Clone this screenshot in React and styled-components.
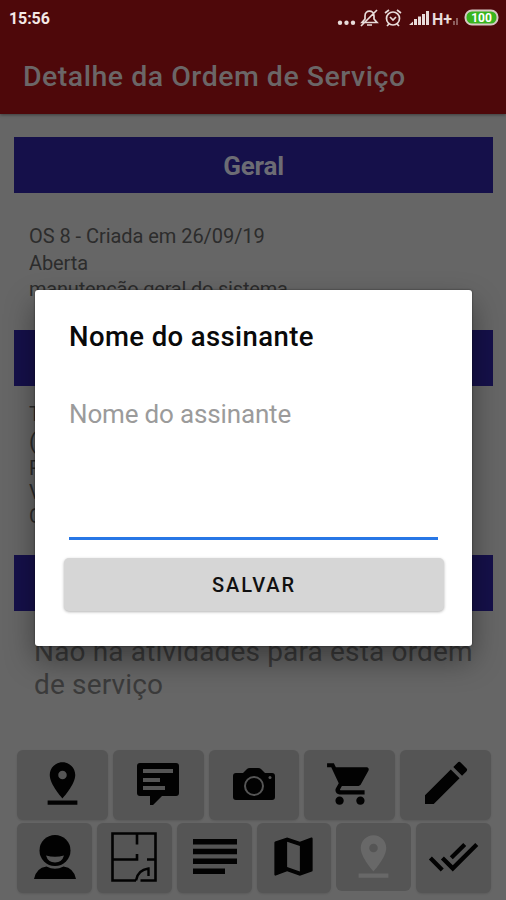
import React from "react";
import styled, { createGlobalStyle } from "styled-components";
import { MdDoneAll, MdEdit, MdMap, MdPinDrop, MdShoppingCart } from "react-icons/md";

const GlobalStyle = createGlobalStyle`
  * {
    box-sizing: border-box;
  }
  body {
    margin: 0;
    background-color: #666666;
    font-family: Roboto, sans-serif;
  }
`;

const Screen = styled.div`
  position: relative;
  width: 506px;
  height: 900px;
  overflow: hidden;
  background-color: #666666;
`;

const Header = styled.header`
  height: 114px;
  background-color: #4e080a;
  box-shadow: 0 1px 3px rgba(0, 0, 0, 0.4);
`;

const StatusBar = styled.div`
  display: flex;
  align-items: center;
  justify-content: space-between;
  height: 36px;
  padding: 0 7px 0 9px;
`;

const Clock = styled.span`
  color: #f4e9e6;
  font-size: 16px;
  font-weight: 700;
  letter-spacing: -0.1px;
`;

const StatusIcons = styled.svg`
  display: block;
`;

const Title = styled.h1`
  margin: 0;
  padding: 23px 0 0 23px;
  color: #6b6667;
  font-size: 28.5px;
  line-height: 36px;
  font-weight: 500;
  letter-spacing: 0.5px;
  white-space: nowrap;
`;

const Page = styled.main`
  display: flex;
  flex-direction: column;
  height: 786px;
  padding: 23px 13px 0 14px;
`;

const Banner = styled.h2`
  flex: none;
  height: 56px;
  margin: 0;
  color: #6c6c74;
  background-color: #15104a;
  font-size: 26px;
  line-height: 58px;
  font-weight: 700;
  letter-spacing: -0.2px;
  text-align: center;
`;

const Details = styled.div`
  flex: none;
  height: ${({ height }) => height}px;
  padding: ${({ top }) => top}px 15px 0;
  color: #2c2c2c;
  overflow: hidden;
`;

const Line = styled.div`
  height: ${({ height }) => height}px;
  font-size: ${({ size }) => size}px;
  line-height: ${({ height }) => height}px;
  letter-spacing: ${({ spacing = 0 }) => spacing}px;
`;

const Empty = styled.p`
  flex: none;
  height: 139px;
  margin: 0;
  padding: 24px 0 0 20px;
  color: #3b3b3b;
  font-size: 28px;
  line-height: 33px;
  letter-spacing: 0.16px;
  white-space: nowrap;
`;

const Row = styled.div`
  display: grid;
  grid-template-columns: repeat(${({ count }) => count}, 1fr);
  gap: 5px;
  padding: 0 2px 0 3px;
  margin-bottom: 3px;
`;

const Action = styled.button`
  display: flex;
  align-items: center;
  justify-content: center;
  height: ${({ disabled }) => (disabled ? 68 : 70)}px;
  padding: 0 0 ${({ lift = 3 }) => lift}px ${({ shift = 0 }) => shift}px;
  border: 0;
  border-radius: 6px;
  color: ${({ disabled }) => (disabled ? "#686868" : "#020202")};
  background-color: #555555;
  box-shadow: ${({ disabled }) =>
    disabled ? "none" : "0 1px 2px rgba(0, 0, 0, 0.12)"};
  svg {
    flex: none;
  }
`;

const Dialog = styled.section`
  position: absolute;
  top: 290px;
  left: 35px;
  display: flex;
  flex-direction: column;
  width: 437px;
  height: 356px;
  padding: 28px 28px 33px 29px;
  border-radius: 3px;
  background-color: #ffffff;
  box-shadow: 0 0 2px rgba(0, 0, 0, 0.6), 0 14px 30px rgba(0, 0, 0, 0.4);
`;

const DialogTitle = styled.h3`
  margin: 0 5px;
  color: #090909;
  font-size: 27.5px;
  line-height: 37px;
  font-weight: 500;
  letter-spacing: 0.4px;
`;

const NameField = styled.textarea`
  height: 152px;
  margin: 33px 6px 18px 5px;
  padding: 10px 0;
  border: 0;
  border-bottom: 3px solid #2877e6;
  outline: 0;
  resize: none;
  color: #111111;
  font: 400 26px/32px Roboto, sans-serif;
  letter-spacing: -0.16px;
  &::placeholder {
    color: #9b9b9b;
    opacity: 1;
  }
`;

const SaveButton = styled.button`
  height: 53px;
  flex: none;
  padding: 0;
  border: 0;
  border-radius: 5px;
  color: #101010;
  background-color: #d6d6d6;
  box-shadow: 0 1px 3px rgba(0, 0, 0, 0.3);
  font: 500 20px Roboto, sans-serif;
  letter-spacing: 1.9px;
`;

const Message = () => (
  <svg width="42" height="42" viewBox="0 0 42 42">
    <path
      fill="currentColor"
      fillRule="evenodd"
      d="M3 0H39Q42 0 42 3V30Q42 33 39 33H25L16 42H13V33H3Q0 33 0 30V3Q0 0 3 0ZM6 6V10H36V6ZM6 15V19H23V15ZM6 23V27H28V23Z"
    />
  </svg>
);

const Camera = () => (
  <svg width="42" height="32" viewBox="0 0 42 32">
    <path
      fill="currentColor"
      d="M3 5H10L14 1Q15 0 17 0H25Q27 0 28 1L32 5H39Q42 5 42 8V29Q42 32 39 32H3Q0 32 0 29V8Q0 5 3 5Z"
    />
    <circle cx="21" cy="18" r="9" fill="none" stroke="#555555" strokeWidth="2" />
    <circle cx="37" cy="9.5" r="1.5" fill="#555555" />
  </svg>
);

const Person = () => (
  <svg width="42" height="44" viewBox="0 0 42 44">
    <ellipse cx="21" cy="15.5" rx="15.5" ry="15.5" fill="currentColor" />
    <path fill="#555555" d="M12 20.5Q21 23 30 20.5Q28 27.5 21 27.5Q14 27.5 12 20.5Z" />
    <path fill="currentColor" d="M0 44Q2 33 12.5 31.5Q21 36 29.5 31.5Q40 33 42 44Z" />
  </svg>
);

const FloorPlan = () => (
  <svg width="46" height="50" viewBox="0 0 46 50" fill="none" stroke="currentColor" strokeWidth="2.6">
    <path d="M25 48.5H1.5V1.5H44.5V48.5H29.5M26 2V12.5M1.5 27.5H26V22M36 27.5H44.5" />
    <path d="M25 48.5C26 42 30 37.5 37.5 36.5V44" strokeWidth="2.4" />
  </svg>
);

const Lines = () => (
  <svg width="44" height="35" viewBox="0 0 44 35">
    <path fill="currentColor" d="M0 0H44V5.5H0ZM0 9.8H44V15.3H0ZM0 19.6H44V25.1H0ZM0 29.4H32V35H0Z" />
  </svg>
);

const App = () => (
  <>
    <GlobalStyle />
    <Screen>
      <Header>
        <StatusBar>
          <Clock>15:56</Clock>
          <StatusIcons width="164" height="22" viewBox="0 0 164 22">
            <g fill="#e8dcda">
              <circle cx="5" cy="15.7" r="2.2" />
              <circle cx="11.5" cy="15.7" r="2.2" />
              <circle cx="18" cy="15.7" r="2.2" />
              <path d="M74 18L78 14.5V18ZM79 18V12H82V18ZM83 18V9.5H86V18ZM87 18V7H90V18ZM91 18V4H94V18Z" />
              <path d="M118 18V14H120V18ZM121 18V11H123V18Z" opacity="0.4" />
            </g>
            <g fill="none" stroke="#e8dcda" strokeWidth="1.7">
              <path d="M27 15.5H42L39 12V9C39 2.5 30 2.5 30 9V12ZM32 18H37M42 3L26 19" />
              <circle cx="58" cy="11.5" r="6.5" />
              <path d="M55 10L58 13L61 10M50 6L54 3M62 3L66 6M54 17L52 19M62 17L64 19" />
            </g>
            <text x="97" y="17.5" fill="#e8dcda" fontSize="17" fontWeight="700" textLength="20" lengthAdjust="spacingAndGlyphs">
              H+
            </text>
            <rect x="130.5" y="3.5" width="32" height="14" rx="6.5" fill="#38b51e" stroke="#d7c7c4" strokeWidth="2" />
            <text x="146.5" y="15" fill="#ffffff" fontSize="12" fontWeight="700" textAnchor="middle">
              100
            </text>
          </StatusIcons>
        </StatusBar>
        <Title>Detalhe da Ordem de Serviço</Title>
      </Header>
      <Page>
        <Banner>Geral</Banner>
        <Details height={137} top={30}>
          <Line height={26.7} size={20} spacing={-0.05}>
            OS 8 - Criada em 26/09/19
          </Line>
          <Line height={26.7} size={20} spacing={-0.1}>
            Aberta
          </Line>
          <Line height={26.7} size={20} spacing={-0.2}>
            manutenção geral do sistema
          </Line>
        </Details>
        <Banner />
        <Details height={169} top={15}>
          <Line height={27} size={20}>T</Line>
          <Line height={28} size={22}>(</Line>
          <Line height={24} size={20}>R</Line>
          <Line height={24} size={20}>V</Line>
          <Line height={24} size={20}>C</Line>
        </Details>
        <Banner />
        <Empty>
          Não há atividades para esta ordem
          <br />
          de serviço
        </Empty>
        <Row count={5}>
          <Action>
            <MdPinDrop size={51} />
          </Action>
          <Action lift={2}>
            <Message />
          </Action>
          <Action lift={2}>
            <Camera />
          </Action>
          <Action>
            <MdShoppingCart size={50} />
          </Action>
          <Action lift={5}>
            <MdEdit size={56} />
          </Action>
        </Row>
        <Row count={6}>
          <Action shift={2}>
            <Person />
          </Action>
          <Action>
            <FloorPlan />
          </Action>
          <Action shift={2}>
            <Lines />
          </Action>
          <Action>
            <MdMap size={51} />
          </Action>
          <Action disabled lift={1}>
            <MdPinDrop size={51} />
          </Action>
          <Action>
            <MdDoneAll size={51} />
          </Action>
        </Row>
      </Page>
      <Dialog>
        <DialogTitle>Nome do assinante</DialogTitle>
        <NameField placeholder="Nome do assinante" />
        <SaveButton>SALVAR</SaveButton>
      </Dialog>
    </Screen>
  </>
);

export default App;
